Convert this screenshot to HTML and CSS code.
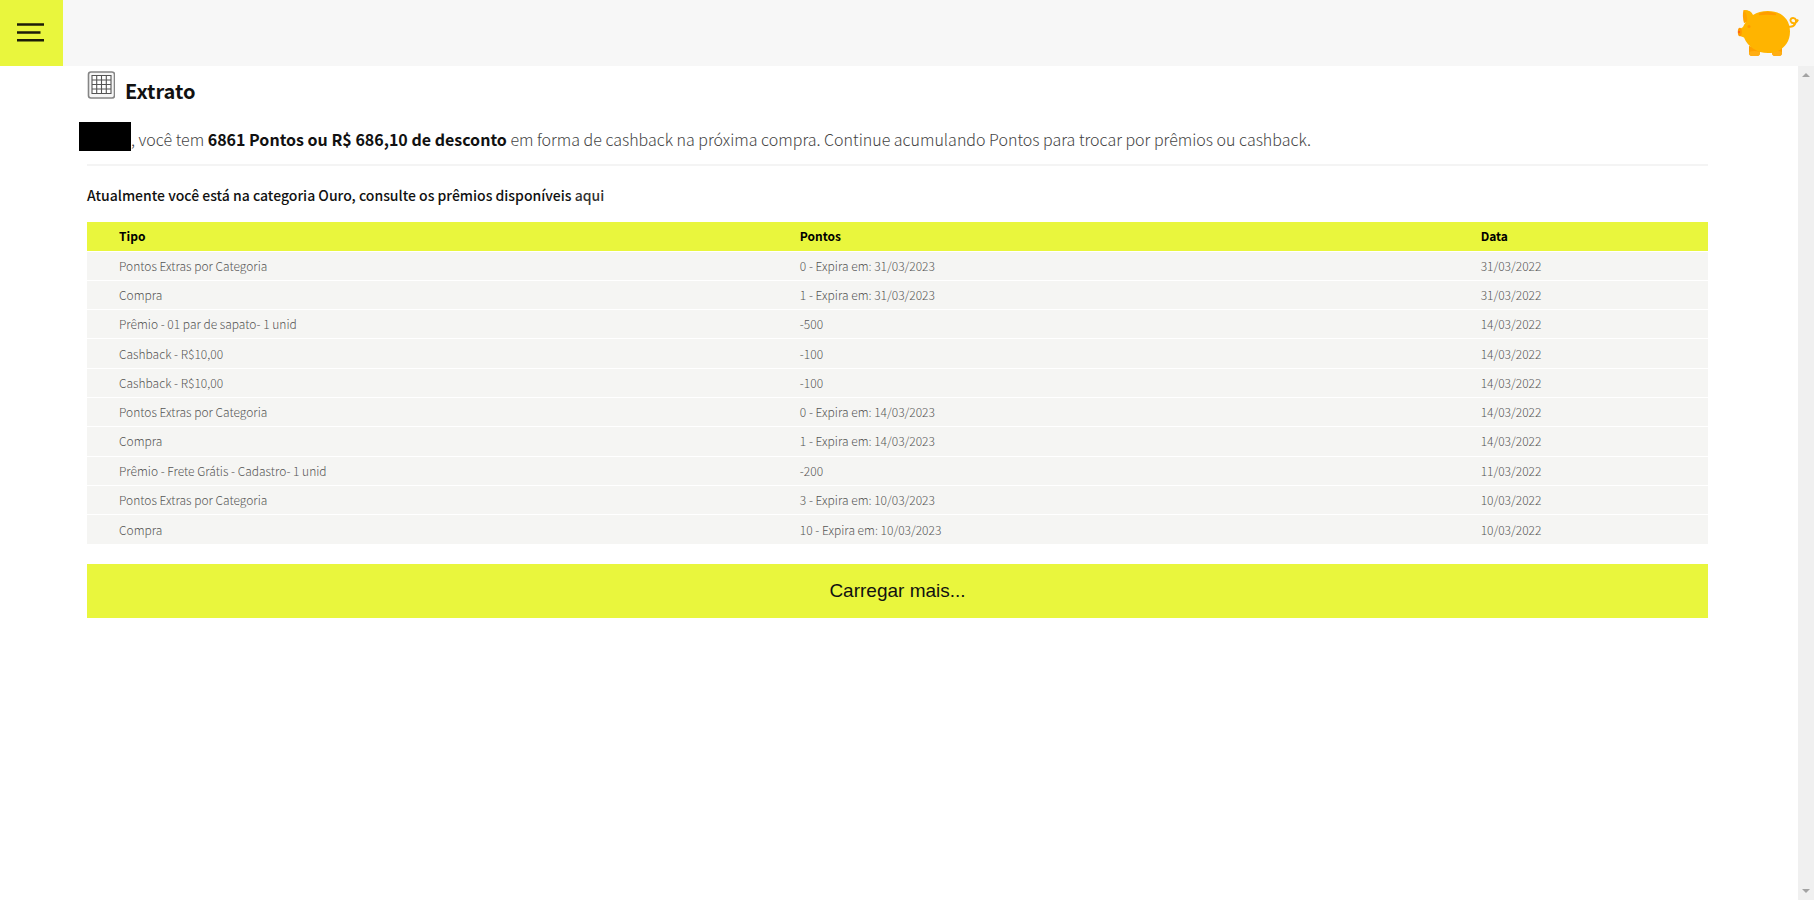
FILE: index.html
```html
<!DOCTYPE html>
<html lang="pt-BR">
<head>
<meta charset="utf-8">
<title>Extrato</title>
<link rel="stylesheet" href="styles.css">
</head>
<body>
<header class="topbar">
  <button class="menu" type="button" aria-label="Menu">
    <svg width="27" height="20" viewBox="0 0 27 20"><path d="M0 1.500h27M0 9.500h23.500M0 17.200h27" stroke="#1c1c08" stroke-width="2.400"/></svg>
  </button>
  <a class="brand" href="#" aria-label="Início">
    <svg width="62" height="48" viewBox="0 0 62 48">
      <path d="M12 37v7q0 3 3 3h5q3 0 3-3v-5zM35 40v4q0 3 3 3h4q3 0 3-3v-8z" fill="#ff9f00"/>
      <path d="M12 43q5-2 11 0 0 4-3 4h-5q-3 0-3-4zM35 43q5-2 10 0 0 4-3 4h-4q-3 0-3-4z" fill="#ffae14"/>
      <path d="M7 14Q5 7 6.500 1q7 0 9.500 6l-5 6z" fill="#ffa300"/>
      <path d="M10 12Q11 6 7 1q7 0 9 5 6-4 15-4C44 2 53 10 53 22.500 53 36 43 44 31 44 20 44 11 38 7 28.500l-4-1.500V20l3-2q1-3 4-6z" fill="#ffb400"/>
      <path d="M22 5.500Q30 1.500 39 5.500q-9-1.200-17 0z" fill="#ff9c00" stroke="#ff9c00" stroke-width="1.500"/>
      <ellipse cx="2.800" cy="23" rx="2" ry="4.200" fill="#ff9a00"/><circle cx="2" cy="23" r="1.100" fill="#ff5a18"/>
      <circle cx="12" cy="17.500" r="1.500" fill="#ff9a00"/>
      <path d="M51 17.500q5 1 7-2.500c2-3 1-6-2-6-2.500 0-3.500 3-1.500 4.500 3 1.500 5 .5 6.500-3" fill="none" stroke="#ffb000" stroke-width="2"/>
    </svg>
  </a>
</header>
<div class="viewport">
  <main class="content">
    <h1 class="title">
      <svg width="28" height="28" viewBox="0 0 28 28" fill="none"><rect x="1.500" y="1" width="26" height="26" rx="2.500" fill="#f6f6f6" stroke="#858585" stroke-width="1.600"/><path d="M5 4.500h19v18H5z" fill="#fff"/><path d="M5 4.500h19v18H5zM9.700 4.500v18M14.500 4.500v18M19.300 4.500v18M5 9h19M5 13.500h19M5 18h19" stroke="#555" stroke-width="1.100"/></svg>
      <span>Extrato</span>
    </h1>
    <p class="summary"><span class="mask"></span><span>, você tem <strong>6861 Pontos ou R$ 686,10 de desconto</strong> em forma de cashback na próxima compra. Continue acumulando Pontos para trocar por prêmios ou cashback.</span></p>
    <p class="category">Atualmente você está na categoria Ouro, consulte os prêmios disponíveis <a href="#">aqui</a></p>
    <table class="statement">
      <thead><tr><th class="wide">Tipo</th><th class="wide">Pontos</th><th>Data</th></tr></thead>
      <tbody>
        <tr><td>Pontos Extras por Categoria</td><td>0 - Expira em: 31/03/2023</td><td>31/03/2022</td></tr>
        <tr><td>Compra</td><td>1 - Expira em: 31/03/2023</td><td>31/03/2022</td></tr>
        <tr><td>Prêmio - 01 par de sapato- 1 unid</td><td>-500</td><td>14/03/2022</td></tr>
        <tr><td>Cashback - R$10,00</td><td>-100</td><td>14/03/2022</td></tr>
        <tr><td>Cashback - R$10,00</td><td>-100</td><td>14/03/2022</td></tr>
        <tr><td>Pontos Extras por Categoria</td><td>0 - Expira em: 14/03/2023</td><td>14/03/2022</td></tr>
        <tr><td>Compra</td><td>1 - Expira em: 14/03/2023</td><td>14/03/2022</td></tr>
        <tr><td>Prêmio - Frete Grátis - Cadastro- 1 unid</td><td>-200</td><td>11/03/2022</td></tr>
        <tr><td>Pontos Extras por Categoria</td><td>3 - Expira em: 10/03/2023</td><td>10/03/2022</td></tr>
        <tr><td>Compra</td><td>10 - Expira em: 10/03/2023</td><td>10/03/2022</td></tr>
      </tbody>
    </table>
    <button class="more" type="button">Carregar mais...</button>
  </main>
  <div class="scrollbar" aria-hidden="true">
    <svg width="8" height="4" viewBox="0 0 8 4"><path d="M0 4l4-4 4 4z" fill="#a3a3a3"/></svg>
    <svg width="8" height="4" viewBox="0 0 8 4"><path d="M0 0h8l-4 4z" fill="#a3a3a3"/></svg>
  </div>
</div>
</body>
</html>
```
FILE: styles.css
```css
* { box-sizing: border-box; }
body {
  margin: 0;
  min-height: 100vh;
  display: flex;
  flex-direction: column;
  background: #fff;
  color: #111;
  font-family: "Noto Sans CJK SC", "Noto Sans", sans-serif;
}
.topbar {
  display: flex;
  justify-content: space-between;
  height: 66px;
  background: #f7f7f7;
}
.menu {
  display: flex;
  align-items: center;
  width: 63px;
  padding: 0 0 0 17px;
  border: 0;
  background: #e9f63d;
}
.brand { padding: 9px 15px 0 0; }
.brand svg { display: block; }
.viewport { flex: 1; display: flex; }
.content { flex: 1; padding: 0 90px 0 87px; }
.scrollbar {
  width: 16px;
  padding: 7px 4px;
  display: flex;
  flex-direction: column;
  justify-content: space-between;
  background: #f0f0f0;
}
.title {
  display: flex;
  align-items: flex-start;
  gap: 10px;
  margin: 0;
  padding-top: 5px;
  font-size: 20px;
  line-height: 40px;
  font-weight: 700;
}
.summary {
  display: flex;
  align-items: center;
  margin: 0 0 0 -8px;
  padding-top: 10px;
  color: #444;
  font-size: 16px;
  line-height: 36px;
  font-weight: 300;
}
.summary strong { color: #111; font-weight: 700; }
.mask { width: 52px; height: 29px; margin-bottom: 6px; background: #000; }
.category {
  margin: 7px 0 0;
  padding: 15px 0 13px;
  border-top: 2px solid #f4f4f4;
  font-size: 14px;
  line-height: 28px;
  font-weight: 500;
}
.category a { color: #333; text-decoration: none; }
.statement {
  width: 100%;
  table-layout: fixed;
  border-collapse: collapse;
  font-size: 12px;
  line-height: 18px;
}
.statement th, .statement td { height: 29px; padding: 0 32px; text-align: left; }
.statement th { background: #e9f63d; color: #000; font-weight: 700; }
.statement tbody { height: 293px; }
.statement td {
  border-top: 1px solid #fff;
  background: #f5f5f3;
  color: #555;
  font-weight: 300;
}
.wide { width: 42%; }
.more {
  display: block;
  width: 100%;
  height: 54px;
  margin-top: 20px;
  border: 0;
  background: #e9f63d;
  color: #111;
  font: 19px "Liberation Sans", Arial, sans-serif;
}
```
